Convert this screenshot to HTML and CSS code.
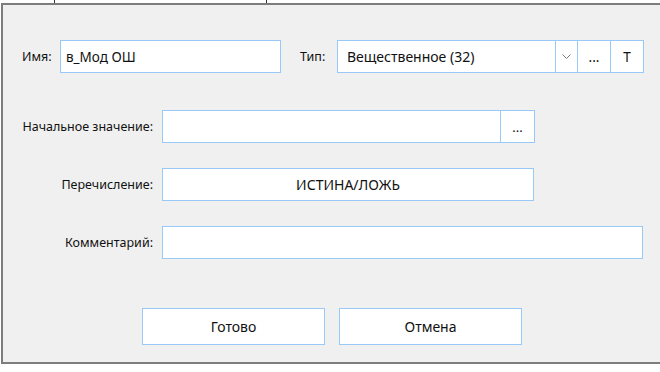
FILE: index.html
```html
<!DOCTYPE html>
<html lang="ru">
<head>
    <meta charset="UTF-8">
    <title>Переменная</title>
    <link rel="stylesheet" href="styles.css">
</head>
<body>
    <div class="top_strip">
        <span class="mark mark_1"></span>
        <span class="mark mark_2"></span>
    </div>

    <div class="dialog">
        <!-- имя и тип -->
        <div class="row row_first">
            <label class="lbl_short">Имя:</label>
            <div class="field name_field">в_Мод ОШ</div>
            <label class="lbl_type">Тип:</label>
            <div class="combo">
                <div class="combo_text">Вещественное (32)</div>
                <div class="combo_arrow">
                    <svg width="9" height="6" viewBox="0 0 9 6"><polyline points="0.5,0.5 4.5,4.5 8.5,0.5" fill="none" stroke="#7a7a7a" stroke-width="1"/></svg>
                </div>
                <div class="combo_btn">...</div>
                <div class="combo_btn">T</div>
            </div>
        </div>

        <div class="row row_init">
            <label class="lbl">Начальное значение:</label>
            <div class="field init_field"></div>
            <div class="field_btn">...</div>
        </div>

        <div class="row row_enum">
            <label class="lbl">Перечисление:</label>
            <div class="field enum_field">ИСТИНА/ЛОЖЬ</div>
        </div>

        <div class="row row_comment">
            <label class="lbl">Комментарий:</label>
            <div class="field comment_field"></div>
        </div>

        <div class="buttons">
            <button class="btn">Готово</button>
            <button class="btn">Отмена</button>
        </div>
    </div>
</body>
</html>
```

FILE: styles.css
```css
*{margin: 0;padding: 0;box-sizing: border-box;}

body{background: #fff;font-family: "Noto Sans", "Open Sans", sans-serif;font-size: 12.5px;color: #111;
width: 660px;height: 372px;overflow: hidden;}

/* кусочек таблицы сверху */
.top_strip{height: 3px;display: flex;}
.mark{width: 1px;height: 3px;background: #333;}
.mark_1{margin-left: 54px;}
.mark_2{margin-left: 211px;}

.dialog{background: #f0f0f0;border-top: 2px solid #7d7d7d;border-left: 2px solid #7d7d7d;border-bottom: 2px solid #7d7d7d;
margin-left: 1px;height: 361px;}

.row{display: flex;align-items: center;height: 33px;}
.row_first{margin-top: 35px;padding-left: 19px;}
.row_init{margin-top: 37px;}
.row_enum,.row_comment{margin-top: 25px;}

.field{background: #fff;border: 1px solid #99c9f8;height: 33px;display: flex;align-items: center;padding-left: 8px;font-size: 13.5px;}

.lbl_short{width: 38px;}
.name_field{width: 221px;padding-left: 5px;}
.lbl_type{width: 37px;margin-left: 19px;}

.combo{display: flex;height: 33px;background: #fff;border: 1px solid #99c9f8;}
.combo_text{width: 217px;display: flex;align-items: center;padding-left: 9px;font-size: 14px;}
.combo_arrow{width: 22px;border-left: 1px solid #99c9f8;display: flex;align-items: center;justify-content: center;}
.combo_btn{width: 33px;border-left: 1px solid #99c9f8;display: flex;align-items: center;justify-content: center;font-size: 13.5px;}

.lbl{width: 150px;text-align: right;padding-right: 0;margin-right: 9px;}
.init_field{width: 339px;}
.field_btn{width: 34px;height: 33px;background: #fff;border: 1px solid #99c9f8;border-left: none;
display: flex;align-items: center;justify-content: center;font-size: 13px;}
.enum_field{width: 372px;justify-content: center;padding-left: 0;font-size: 14px;}
.comment_field{width: 481px;}

.buttons{display: flex;gap: 14px;margin-top: 49px;padding-left: 139px;}
.btn{width: 183px;height: 37px;background: #fff;border: 1px solid #99c9f8;font-family: inherit;font-size: 14px;color: #111;}
```
